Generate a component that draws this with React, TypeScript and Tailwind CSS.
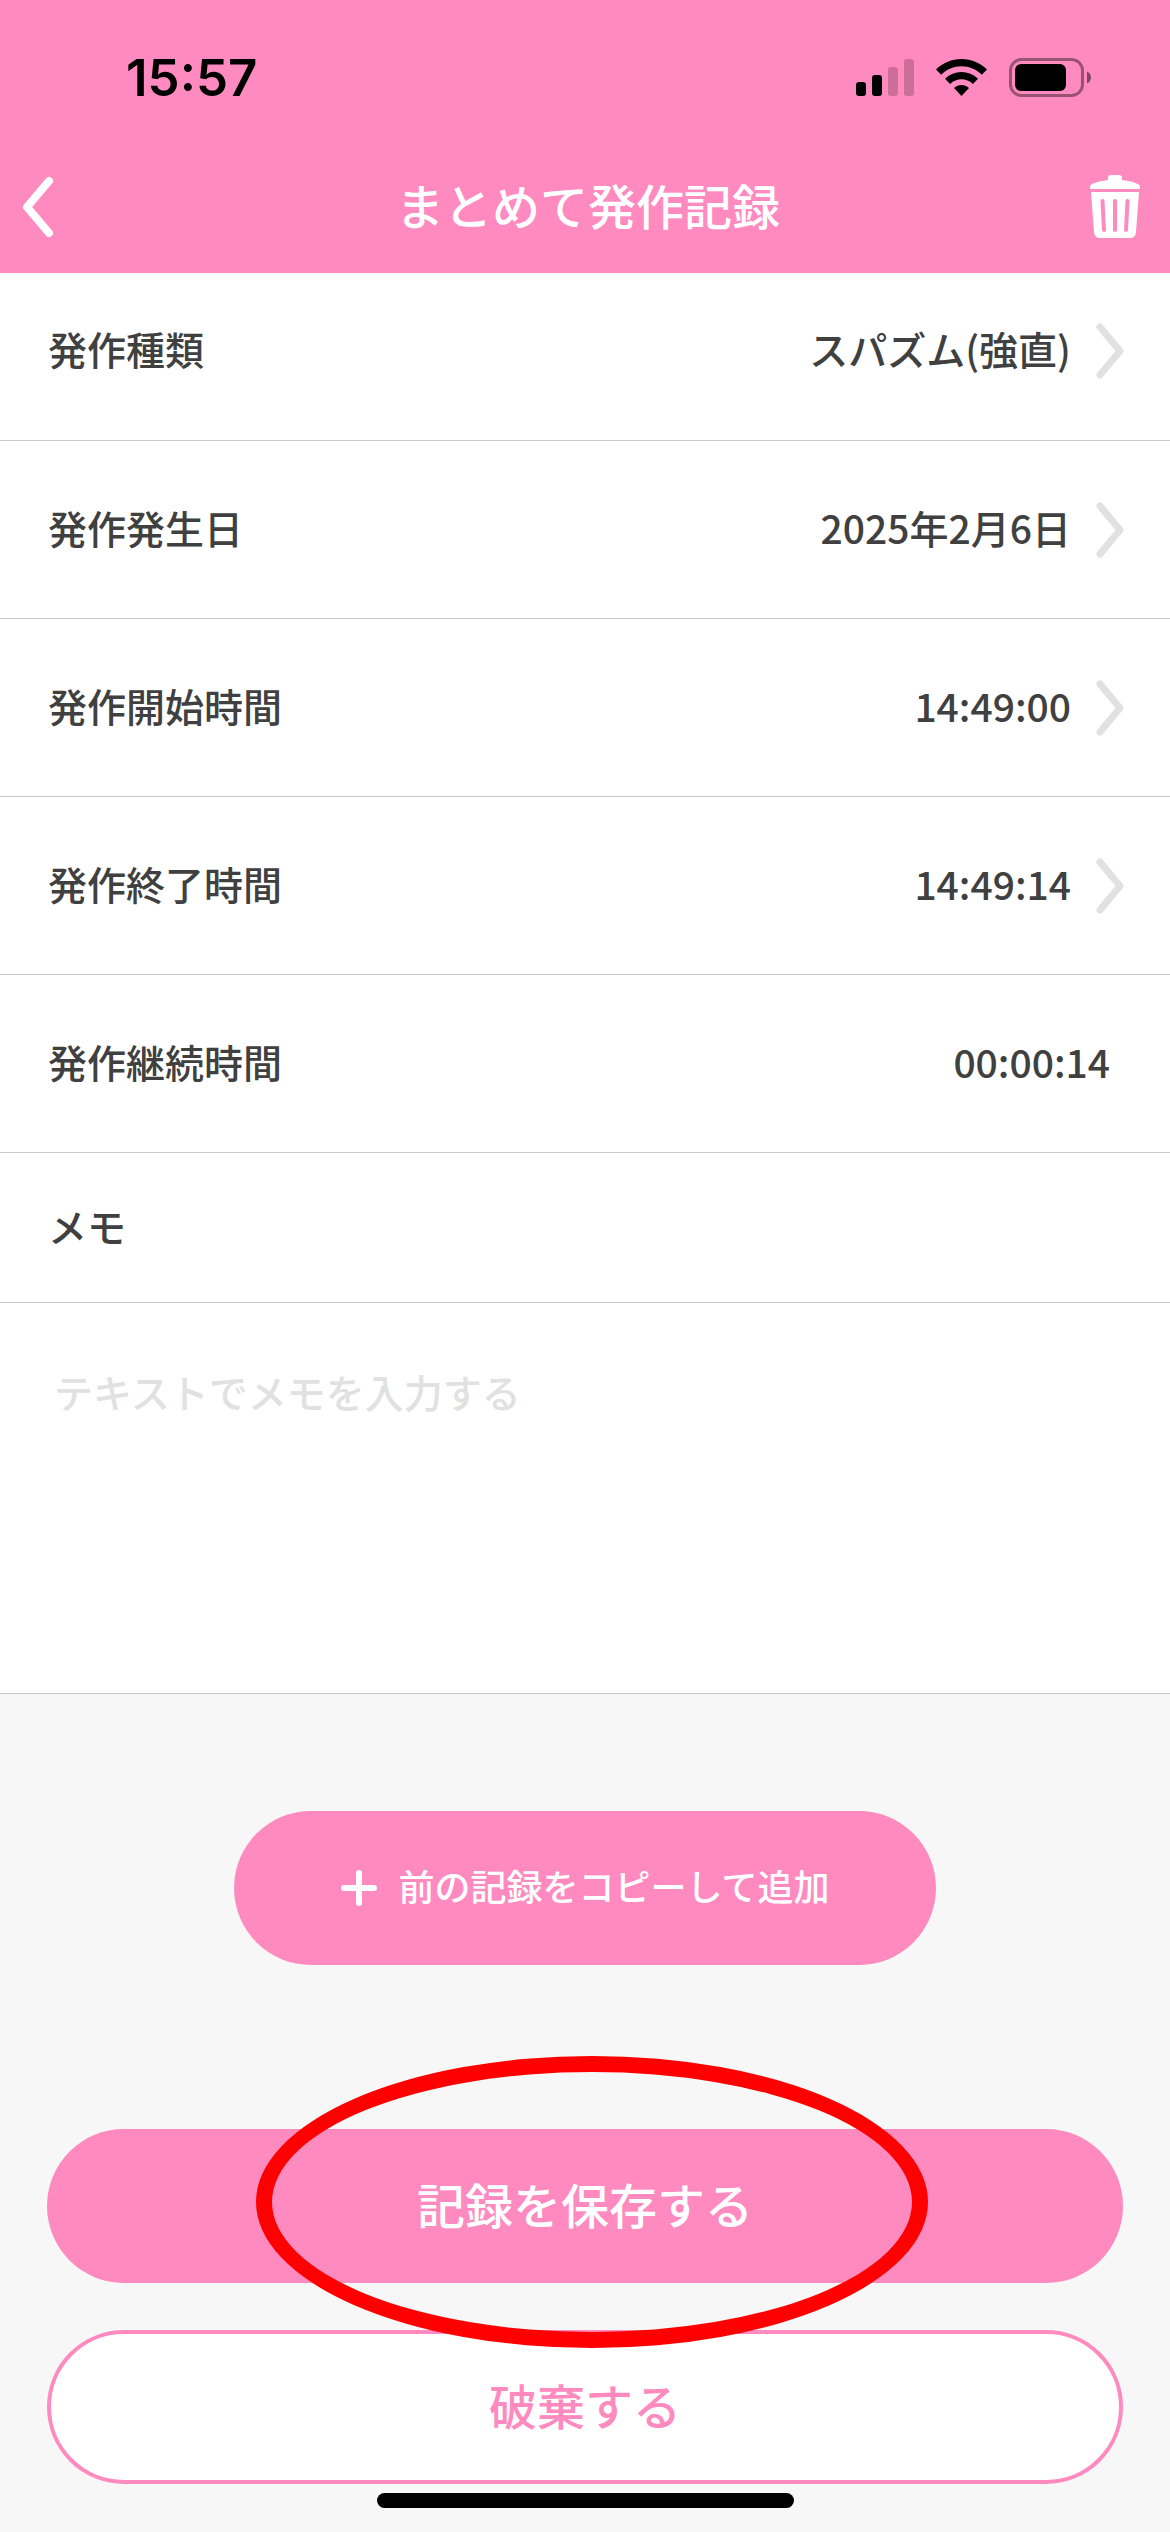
import React from 'react';

const records = [
    { label: '発作種類', value: 'スパズム(強直)', editable: true },
    { label: '発作発生日', value: '2025年2月6日', editable: true },
    { label: '発作開始時間', value: '14:49:00', editable: true },
    { label: '発作終了時間', value: '14:49:14', editable: true },
    { label: '発作継続時間', value: '00:00:14', editable: false },
];

const StatusBar = () => {
    return (
        <div className="flex items-center justify-between pt-12 pl-[126px] pr-[79px]">
            <span className="font-['Inter',sans-serif] text-[51px] leading-[60px] font-semibold text-black">15:57</span>
            <div className="flex items-center gap-[22px]">
                {/* Signal */}
                <svg width="58" height="38" viewBox="0 0 58 38" aria-hidden="true">
                    <rect x="0" y="23" width="10" height="14" rx="3" />
                    <rect x="16" y="16" width="10" height="21" rx="3" />
                    <rect x="32" y="8" width="10" height="29" rx="3" opacity="0.2" />
                    <rect x="48" y="0" width="10" height="37" rx="3" opacity="0.2" />
                </svg>
                {/* Wi-Fi */}
                <svg width="51" height="38" viewBox="0 0 51 38" aria-hidden="true">
                    <path d="M0 10.500C7 3.800 15.800 0 25.500 0S44 3.800 51 10.500L45.800 15.700C40 10.300 33.200 7.300 25.500 7.300S11 10.300 5.200 15.700Z" />
                    <path d="M9 19.700C13.600 15.300 19.200 13 25.500 13S37.400 15.300 42 19.700L36.900 24.900C33.500 21.800 29.800 20.300 25.500 20.300S17.500 21.800 14.100 24.900Z" />
                    <path d="M18 29C20.200 27 22.700 26 25.500 26S30.800 27 33 29L25.500 37Z" />
                </svg>
                {/* Battery */}
                <svg width="82" height="40" viewBox="0 0 82 40" aria-hidden="true">
                    <rect x="1.500" y="1.500" width="72" height="36" rx="11" fill="none" stroke="#000" strokeWidth="3" opacity="0.4" />
                    <rect x="6" y="6" width="51" height="27" rx="6" />
                    <path d="M78 13.500C80.500 14.500 82 17 82 19.500S80.500 24.500 78 25.500Z" opacity="0.5" />
                </svg>
            </div>
        </div>
    );
};

const Chevron = () => {
    return (
        <svg width="28" height="56" viewBox="0 0 28 56" fill="none" aria-hidden="true">
            <path d="M4 4L24 28L4 52" stroke="#e1e1e1" strokeWidth="7" strokeLinecap="round" strokeLinejoin="round" />
        </svg>
    );
};

const App = () => {
    return (
        <div className="flex min-h-screen flex-col bg-[#f7f7f7] font-['Noto_Sans_CJK_JP',sans-serif] font-medium text-[#404040]">
            {/* Header */}
            <header className="h-[273px] bg-[#ff8abf]">
                <StatusBar />
                <div className="flex items-center justify-between pt-[67px] pl-5 pr-[28px]">
                    <button aria-label="戻る" className="w-[68px]">
                        <svg width="36" height="64" viewBox="0 0 36 64" fill="none">
                            <path d="M29 6L7 32L29 58" stroke="#fff" strokeWidth="8" strokeLinecap="round" strokeLinejoin="round" />
                        </svg>
                    </button>
                    <h1 className="pb-1.5 text-5xl leading-[58px] text-white">まとめて発作記録</h1>
                    <button aria-label="削除">
                        <svg width="54" height="64" viewBox="0 0 54 64">
                            <path d="M20 5V3Q20 0 23 0H31Q34 0 34 3V5Q44 6 50 9Q52 10 52 12V14H2V12Q2 10 4 9Q10 6 20 5Z" fill="#fff" />
                            <path d="M3 17H51L48 57Q47.500 63 42 63H12Q6.500 63 6 57Z" fill="#fff" />
                            <path d="M14.500 26L16 55M27 26V55M39.500 26L38 55" stroke="#ff8abf" strokeWidth="4" strokeLinecap="round" />
                        </svg>
                    </button>
                </div>
            </header>

            {/* Record rows */}
            <main className="bg-white text-[39px] leading-[58px]">
                {records.map((record, index) => {
                    const rowClass = `flex w-full items-center justify-between border-b border-[#c8c8c8] pl-12 ${
                        index === 0 ? 'h-[168px] pb-[11px]' : 'h-[178px]'
                    }`;
                    return record.editable ? (
                        <button key={record.label} className={`${rowClass} pr-[46px]`}>
                            <span className="pb-1.5">{record.label}</span>
                            <span className="flex items-center gap-[25px]">
                                <span className="pb-1.5">{record.value}</span>
                                <Chevron />
                            </span>
                        </button>
                    ) : (
                        <div key={record.label} className={`${rowClass} pr-[60px]`}>
                            <span className="pb-1.5">{record.label}</span>
                            <span className="pb-1.5">{record.value}</span>
                        </div>
                    );
                })}
                <label htmlFor="memo" className="flex h-[150px] items-center border-b border-[#c8c8c8] pb-1.5 pl-12">
                    メモ
                </label>
                <textarea
                    id="memo"
                    placeholder="テキストでメモを入力する"
                    className="block h-[391px] w-full resize-none border-b border-[#c8c8c8] px-[54px] pt-[59px] outline-none placeholder:text-[#e1e1e1]"
                />
            </main>

            {/* Actions */}
            <div className="flex flex-col items-center pt-[117px]">
                <button className="flex h-[154px] w-3/5 items-center justify-center gap-[22px] rounded-full bg-[#ff8abf] text-4xl text-white">
                    <svg width="36" height="36" viewBox="0 0 36 36" fill="none" aria-hidden="true">
                        <path d="M18 3V33M3 18H33" stroke="#fff" strokeWidth="6" strokeLinecap="round" />
                    </svg>
                    <span className="pb-1.5">前の記録をコピーして追加</span>
                </button>
                <div className="relative mt-[164px] w-[92%]">
                    <button className="block h-[154px] w-full rounded-full bg-[#ff8abf] pb-1.5 text-5xl text-white">記録を保存する</button>
                    <div className="pointer-events-none absolute -top-[73px] left-[209px] h-[292px] w-[672px] rounded-[50%] border-[16px] border-[#ff0000]" />
                </div>
                <button className="mt-[47px] h-[154px] w-[92%] rounded-full border-4 border-[#ff8abf] bg-white pb-1.5 text-5xl text-[#ff8abf]">
                    破棄する
                </button>
                <div className="mt-[9px] h-[15px] w-[417px] rounded-full bg-black" />
            </div>
        </div>
    );
};

export default App;
